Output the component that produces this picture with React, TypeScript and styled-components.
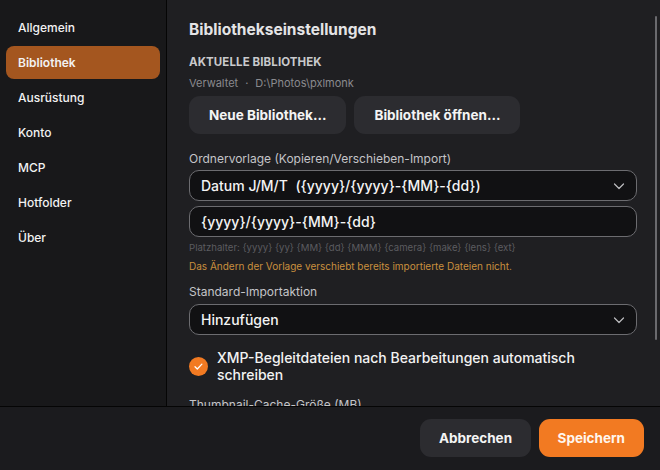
import React, { useState } from "react";
import styled, { createGlobalStyle } from "styled-components";

const GlobalStyle = createGlobalStyle`
  html, body { margin: 0; padding: 0; background: #1b1b1e; }
  body { font-family: Inter, "Noto Sans", sans-serif; -webkit-font-smoothing: antialiased; }
  * { box-sizing: border-box; }
`;

const Shell = styled.div`
  width: 660px;
  height: 470px;
  display: grid;
  grid-template-rows: 406px 64px;
  background: #1b1b1e;
  overflow: hidden;
`;

const Main = styled.div`
  display: grid;
  grid-template-columns: 167px 1fr;
  min-height: 0;
`;

const Sidebar = styled.nav`
  background: #18181a;
  border-right: 1px solid #050505;
  padding: 11px 6px;
  display: flex;
  flex-direction: column;
  gap: 2px;
`;

const NavItem = styled.div<{ $active?: boolean }>`
  height: 33px;
  display: flex;
  align-items: center;
  padding: 0 12px;
  border-radius: 8px;
  font-size: 12px;
  color: #f2f2f2;
  background: ${(p) => (p.$active ? "#a4561f" : "transparent")};
  font-weight: ${(p) => (p.$active ? 600 : 500)};
`;

const ContentPane = styled.div`
  position: relative;
  min-height: 0;
  background: #1f1f22;
`;

const Content = styled.div`
  height: 100%;
  overflow-y: auto;
  scrollbar-width: none;
  padding: 20px 23px 20px 22px;
  display: flex;
  flex-direction: column;
  & > * { flex-shrink: 0; }
`;

const ScrollThumb = styled.div`
  position: absolute;
  right: 3px;
  top: 16px;
  width: 2px;
  height: 324px;
  border-radius: 1px;
  background: #6a6a6e;
  pointer-events: none;
`;

const Title = styled.h2`
  margin: 0;
  font-size: 15.5px;
  font-weight: 700;
  color: #e4e4e6;
  line-height: 20px;
`;

const SectionTitle = styled.div`
  margin-top: 14px;
  font-size: 11.5px;
  font-weight: 700;
  color: #c9c9cc;
  letter-spacing: 0.1px;
  line-height: 16px;
`;

const Meta = styled.div`
  margin-top: 6px;
  font-size: 11px;
  color: #8a8a8e;
  line-height: 14px;
  display: flex;
  gap: 7px;
`;

const ButtonRow = styled.div`
  display: flex;
  gap: 8px;
  margin-top: 6px;
`;

const Button = styled.button<{ $primary?: boolean }>`
  height: 38px;
  padding: 0 ${(p) => (p.$primary ? 19 : 20)}px;
  border: none;
  border-radius: 11px;
  font-family: inherit;
  font-size: 13.5px;
  font-weight: 700;
  color: ${(p) => (p.$primary ? "#fff6ee" : "#f4f4f4")};
  background: ${(p) => (p.$primary ? "#f27a22" : "#2c2c30")};
  cursor: pointer;
`;

const FooterButton = styled(Button)`
  padding: 0 ${(p) => (p.$primary ? 19 : 18.5)}px;
`;

const Label = styled.div<{ $top: number }>`
  margin-top: ${(p) => p.$top}px;
  font-size: 12px;
  color: #c4c4c8;
  line-height: 16px;
`;

const FieldBox = styled.div<{ $top: number }>`
  margin-top: ${(p) => p.$top}px;
  height: 31px;
  border: 1px solid #6c6c70;
  border-radius: 10px;
  background: #111113;
  display: flex;
  align-items: center;
  justify-content: space-between;
  padding: 0 10px 0 11px;
  font-size: 14px;
  font-weight: 500;
  color: #f4f4f4;
`;

const Chevron = styled.svg`
  width: 14px;
  height: 14px;
  flex: none;
`;

const Hint = styled.div<{ $warn?: boolean; $top: number }>`
  margin-top: ${(p) => p.$top}px;
  font-size: ${(p) => (p.$warn ? "10px" : "9.6px")};
  color: ${(p) => (p.$warn ? "#c98f3e" : "#5c5c60")};
  line-height: 13px;
`;

const CheckRow = styled.label`
  margin-top: 14px;
  display: flex;
  align-items: center;
  gap: 9px;
`;

const CheckCircle = styled.span`
  width: 19px;
  height: 19px;
  border-radius: 50%;
  background: #f27a22;
  display: flex;
  align-items: center;
  justify-content: center;
  flex: none;
`;

const CheckText = styled.span`
  font-size: 14px;
  font-weight: 500;
  color: #f2f2f2;
  line-height: 17px;
  max-width: 390px;
`;

const Footer = styled.footer`
  border-top: 1px solid #050505;
  background: #1b1b1e;
  display: flex;
  justify-content: flex-end;
  align-items: flex-start;
  gap: 8px;
  padding: 12px 16px 0 0;
`;

const ChevronIcon = () => (
  <Chevron viewBox="0 0 14 14" fill="none">
    <path d="M2.5 5l4.5 4.5L11.5 5" stroke="#bdbdc0" strokeWidth="1.2" strokeLinecap="round" strokeLinejoin="round" />
  </Chevron>
);

const nav = ["Allgemein", "Bibliothek", "Ausrüstung", "Konto", "MCP", "Hotfolder", "Über"];

export default function App() {
  const [active] = useState("Bibliothek");
  return (
    <>
      <GlobalStyle />
      <Shell>
        <Main>
          <Sidebar>
            {nav.map((n) => (
              <NavItem key={n} $active={n === active}>
                {n}
              </NavItem>
            ))}
          </Sidebar>
          <ContentPane>
            <Content>
              <Title>Bibliothekseinstellungen</Title>
              <SectionTitle>AKTUELLE BIBLIOTHEK</SectionTitle>
              <Meta>
                <span>Verwaltet</span>
                <span>·</span>
                <span>D:\Photos\pxlmonk</span>
              </Meta>
              <ButtonRow>
                <Button>Neue Bibliothek...</Button>
                <Button>Bibliothek öffnen...</Button>
              </ButtonRow>
              <Label $top={17}>Ordnervorlage (Kopieren/Verschieben-Import)</Label>
              <FieldBox $top={3}>
                <span>Datum J/M/T&nbsp;&nbsp;({"{yyyy}/{yyyy}-{MM}-{dd}"})</span>
                <ChevronIcon />
              </FieldBox>
              <FieldBox $top={5}>
                <span>{"{yyyy}/{yyyy}-{MM}-{dd}"}</span>
              </FieldBox>
              <Hint $top={4}>Platzhalter: {"{yyyy} {yy} {MM} {dd} {MMM} {camera} {make} {lens} {ext}"}</Hint>
              <Hint $top={6} $warn>
                Das Ändern der Vorlage verschiebt bereits importierte Dateien nicht.
              </Hint>
              <Label $top={11}>Standard-Importaktion</Label>
              <FieldBox $top={4}>
                <span>Hinzufügen</span>
                <ChevronIcon />
              </FieldBox>
              <CheckRow>
                <CheckCircle>
                  <svg width="11" height="11" viewBox="0 0 12 12" fill="none">
                    <path d="M2.2 6.3l2.5 2.4 5-5.3" stroke="#fff" strokeWidth="1.4" strokeLinecap="round" strokeLinejoin="round" />
                  </svg>
                </CheckCircle>
                <CheckText>XMP-Begleitdateien nach Bearbeitungen automatisch schreiben</CheckText>
              </CheckRow>
              <Label $top={14}>Thumbnail-Cache-Größe (MB)</Label>
              <FieldBox $top={4}>
                <span>2048</span>
              </FieldBox>
            </Content>
            <ScrollThumb />
          </ContentPane>
        </Main>
        <Footer>
          <FooterButton>Abbrechen</FooterButton>
          <FooterButton $primary>Speichern</FooterButton>
        </Footer>
      </Shell>
    </>
  );
}
